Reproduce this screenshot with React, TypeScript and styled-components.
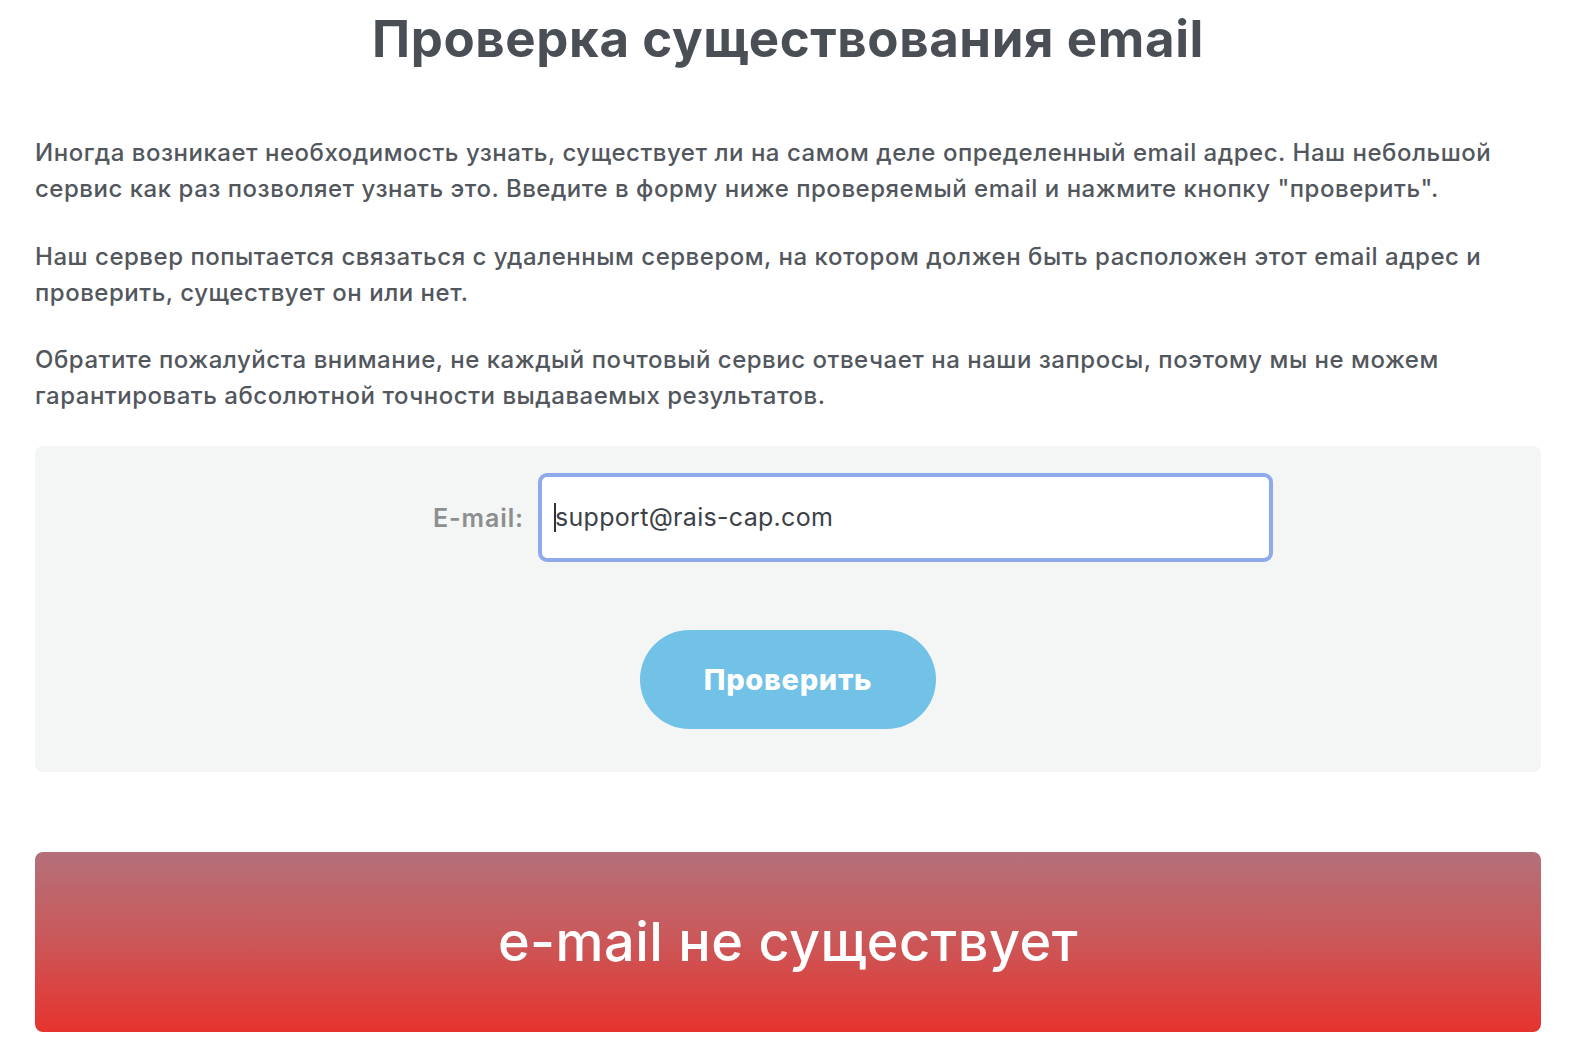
import React from "react";
import styled, { createGlobalStyle } from "styled-components";

const Global = createGlobalStyle`
  html, body { margin: 0; padding: 0; background: #ffffff; }
  body { font-family: Inter, "Noto Sans", sans-serif; color: #51565c; }
  * { box-sizing: border-box; }
`;

const Page = styled.main`
  width: 1506px;
  margin-left: 35px;
  padding-top: 9px;
`;

const Title = styled.h1`
  margin: 0;
  text-align: center;
  font-size: 51px;
  line-height: 60px;
  font-weight: 700;
  color: #4a4e55;
  letter-spacing: 0.6px;
`;

const Text = styled.p<{ $gap: number }>`
  margin: ${(p) => p.$gap}px 0 0;
  font-size: 24px;
  line-height: 36px;
  font-weight: 500;
  color: #52575d;
  letter-spacing: 0.52px;
`;

const Card = styled.section`
  margin-top: 32px;
  height: 326px;
  background: #f4f5f5;
  border-radius: 8px;
  padding-top: 27px;
  display: flex;
  flex-direction: column;
  align-items: stretch;
`;

const FieldRow = styled.label`
  display: flex;
  align-items: center;
`;

const FieldLabel = styled.span`
  width: 489px;
  text-align: right;
  margin-right: 14px;
  font-size: 25px;
  font-weight: 600;
  color: #8d8e90;
  letter-spacing: 0.9px;
`;

const InputWrap = styled.span`
  position: relative;
  display: block;
  &::after {
    content: "";
    position: absolute;
    left: 16px;
    top: 30px;
    width: 2px;
    height: 29px;
    background: #2f3338;
  }
`;

const Input = styled.input`
  display: block;
  width: 735px;
  height: 89px;
  border: 4px solid #8eaaea;
  border-radius: 9px;
  background: #ffffff;
  padding: 0 0 2px 13px;
  font-family: Inter, "Noto Sans", sans-serif;
  font-size: 25px;
  font-weight: 400;
  letter-spacing: 0.3px;
  color: #3c4148;
  outline: none;
  caret-color: transparent;
`;

const ButtonRow = styled.div`
  margin-top: 68px;
  display: flex;
  justify-content: center;
`;

const CheckButton = styled.button`
  width: 296px;
  height: 99px;
  border: none;
  border-radius: 50px;
  background: #72c1e6;
  color: #ffffff;
  font-family: Inter, "Noto Sans", sans-serif;
  font-size: 29px;
  font-weight: 800;
  letter-spacing: 0.7px;
  cursor: pointer;
`;

const Result = styled.div`
  margin-top: 80px;
  height: 180px;
  border-radius: 8px;
  background: linear-gradient(180deg, #b47079 0%, #c95a5c 45%, #e6332e 100%);
  display: flex;
  align-items: center;
  justify-content: center;
  color: #ffffff;
  font-size: 54px;
  font-weight: 500;
  letter-spacing: 0.5px;
  padding-bottom: 2px;
`;

export default function App() {
  return (
    <>
      <Global />
      <Page>
        <Title>Проверка существования email</Title>
        <Text $gap={66}>
          Иногда возникает необходимость узнать, существует ли на самом деле определенный email адрес. Наш небольшой
          сервис как раз позволяет узнать это. Введите в форму ниже проверяемый email и нажмите кнопку "проверить".
        </Text>
        <Text $gap={32}>
          Наш сервер попытается связаться с удаленным сервером, на котором должен быть расположен этот email адрес и
          проверить, существует он или нет.
        </Text>
        <Text $gap={31}>
          Обратите пожалуйста внимание, не каждый почтовый сервис отвечает на наши запросы, поэтому мы не можем
          гарантировать абсолютной точности выдаваемых результатов.
        </Text>
        <Card>
          <FieldRow>
            <FieldLabel>E-mail:</FieldLabel>
            <InputWrap>
              <Input type="text" defaultValue="support@rais-cap.com" />
            </InputWrap>
          </FieldRow>
          <ButtonRow>
            <CheckButton type="button">Проверить</CheckButton>
          </ButtonRow>
        </Card>
        <Result>e-mail не существует</Result>
      </Page>
    </>
  );
}
